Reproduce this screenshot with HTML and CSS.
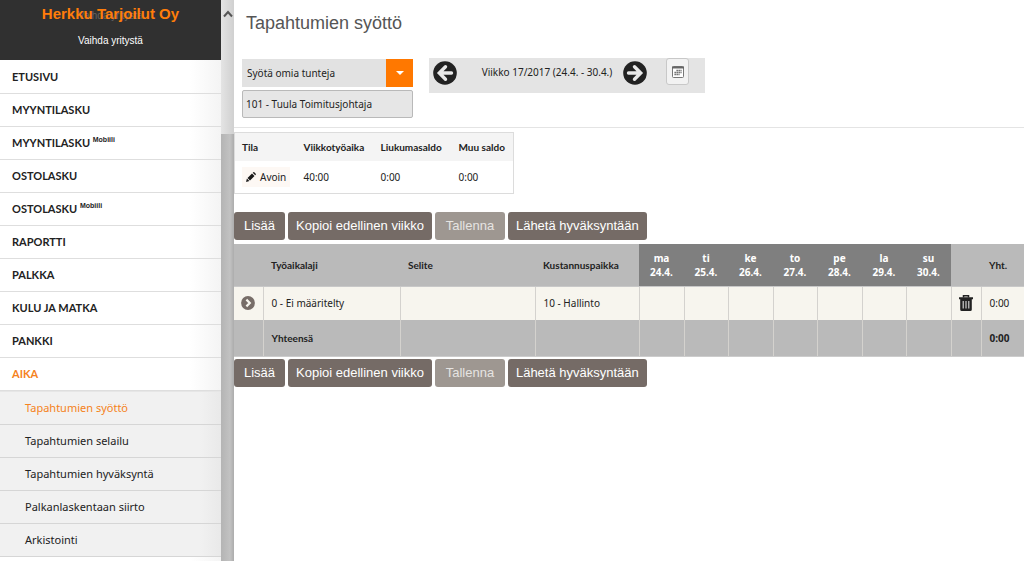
FILE: index.html
```html
<!DOCTYPE html>
<html lang="fi">
<head>
<meta charset="utf-8">
<title>Tapahtumien syöttö</title>
<link rel="stylesheet" href="styles.css">
</head>
<body>
<div class="app">
  <aside class="sidebar">
    <header class="company">
      <span class="company-ghost" aria-hidden="true">Vaihda yritystä</span>
      <strong class="company-name">Herkku Tarjoilut Oy</strong>
      <a class="company-switch" href="#">Vaihda yritystä</a>
    </header>
    <nav class="menu">
      <a href="#">ETUSIVU</a>
      <a href="#">MYYNTILASKU</a>
      <a href="#">MYYNTILASKU <span class="tag">Mobiili</span></a>
      <a href="#">OSTOLASKU</a>
      <a href="#">OSTOLASKU <span class="tag">Mobiili</span></a>
      <a href="#">RAPORTTI</a>
      <a href="#">PALKKA</a>
      <a href="#">KULU JA MATKA</a>
      <a href="#">PANKKI</a>
      <a class="active" href="#">AIKA</a>
      <div class="submenu">
        <a class="active" href="#">Tapahtumien syöttö</a>
        <a href="#">Tapahtumien selailu</a>
        <a href="#">Tapahtumien hyväksyntä</a>
        <a href="#">Palkanlaskentaan siirto</a>
        <a href="#">Arkistointi</a>
      </div>
    </nav>
  </aside>
  <div class="scrollbar">
    <button class="scroll-up" type="button" aria-label="Vieritä ylös"><svg width="10" height="8" viewBox="0 0 10 8"><path d="M1 6.500 5 2l4 4.500" fill="none" stroke="#555" stroke-width="2"/></svg></button>
    <div class="thumb"></div>
  </div>
  <main class="main">
    <h1>Tapahtumien syöttö</h1>
    <div class="filters">
      <div class="pickers">
        <div class="select-wrap">
          <select class="mode" aria-label="Syöttötapa"><option>Syötä omia tunteja</option></select>
          <span class="select-arrow"></span>
        </div>
        <input class="person" type="text" aria-label="Henkilö" value="101 - Tuula Toimitusjohtaja">
      </div>
      <div class="week">
        <button class="round" type="button" aria-label="Edellinen viikko"><svg width="24" height="24" viewBox="0 0 24 24"><circle cx="12" cy="12" r="11.800" fill="#222"/><path d="M12.500 5.800 6.300 12l6.200 6.200M7 12h11.500" fill="none" stroke="#e9e9e9" stroke-width="3.400" stroke-linecap="round"/></svg></button>
        <span class="week-label">Viikko 17/2017 (24.4. - 30.4.)</span>
        <button class="round" type="button" aria-label="Seuraava viikko"><svg width="24" height="24" viewBox="0 0 24 24"><circle cx="12" cy="12" r="11.800" fill="#222"/><path d="M11.500 5.800 17.700 12l-6.200 6.200M17 12H5.500" fill="none" stroke="#e9e9e9" stroke-width="3.400" stroke-linecap="round"/></svg></button>
        <button class="calendar" type="button" aria-label="Kalenteri"><svg width="12" height="12" viewBox="0 0 12 12"><rect x=".5" y=".5" width="11" height="11" rx="1" fill="#fff" stroke="#777"/><path d="M0 1.500h12" stroke="#666" stroke-width="2"/><path d="M4.500 4.500h5M2.500 6.500h7M2.500 8.500h5" stroke="#555" stroke-width="1.300" stroke-dasharray="1.300 .7"/></svg></button>
      </div>
    </div>
    <section class="content">
      <table class="balance">
        <thead><tr><th>Tila</th><th>Viikkotyöaika</th><th>Liukumasaldo</th><th>Muu saldo</th></tr></thead>
        <tbody><tr><td><span class="status"><svg width="10" height="10" viewBox="0 0 10 10"><path d="M0 10 .9 6.600 3.400 9.100zM1.500 6 6 1.500 8.500 4 4 8.500zM6.700.8 7.400.200Q7.900-.1 8.300.3L9.700 1.700Q10.100 2.200 9.700 2.700L9.200 3.300z" fill="#1a1a1a"/></svg>Avoin</span></td><td>40:00</td><td>0:00</td><td>0:00</td></tr></tbody>
      </table>
      <div class="actions">
        <button type="button">Lisää</button><button type="button">Kopioi edellinen viikko</button><button class="muted" type="button">Tallenna</button><button type="button">Lähetä hyväksyntään</button>
      </div>
      <table class="hours">
        <colgroup><col class="c-open"><col class="c-type"><col><col class="c-cost"><col class="c-day"><col class="c-day"><col class="c-day"><col class="c-day"><col class="c-day"><col class="c-day"><col class="c-day"><col class="c-del"><col class="c-sum"></colgroup>
        <thead>
          <tr><th></th><th>Työaikalaji</th><th>Selite</th><th>Kustannuspaikka</th><th class="day">ma<br>24.4.</th><th class="day">ti<br>25.4.</th><th class="day">ke<br>26.4.</th><th class="day">to<br>27.4.</th><th class="day">pe<br>28.4.</th><th class="day">la<br>29.4.</th><th class="day">su<br>30.4.</th><th></th><th>Yht.</th></tr>
        </thead>
        <tbody>
          <tr><td class="icon"><button class="bare" type="button" aria-label="Avaa rivi"><svg width="14" height="14" viewBox="0 0 14 14"><circle cx="7" cy="7" r="6.900" fill="#776d68"/><path d="m5.400 3.600 3.400 3.400-3.400 3.400" fill="none" stroke="#f7f5ee" stroke-width="2.200"/></svg></button></td><td>0 - Ei määritelty</td><td></td><td>10 - Hallinto</td><td></td><td></td><td></td><td></td><td></td><td></td><td></td><td class="icon"><button class="bare" type="button" aria-label="Poista rivi"><svg width="14" height="16" viewBox="0 0 14 16"><path d="M4.500 2.500V.8h5v1.700" fill="none" stroke="#222" stroke-width="1.500"/><path d="M0 2.300h14v2H0zM1.200 4h11.600v10.500q0 1.500-1.500 1.500H2.700q-1.500 0-1.500-1.500z" fill="#222"/><path d="M4.200 6v7.500M7 6v7.500M9.800 6v7.500" stroke="#ddd" stroke-width="1.100"/></svg></button></td><td>0:00</td></tr>
        </tbody>
        <tfoot>
          <tr><td></td><td>Yhteensä</td><td></td><td></td><td></td><td></td><td></td><td></td><td></td><td></td><td></td><td></td><td class="total">0:00</td></tr>
        </tfoot>
      </table>
      <div class="actions bottom">
        <button type="button">Lisää</button><button type="button">Kopioi edellinen viikko</button><button class="muted" type="button">Tallenna</button><button type="button">Lähetä hyväksyntään</button>
      </div>
    </section>
  </main>
</div>
</body>
</html>
```
FILE: styles.css
```css
* { box-sizing: border-box; }
body { margin: 0; background: #fff; color: #222; font: 10px/14px "Noto Sans", "Open Sans", sans-serif; }
button, input, select { font: inherit; color: inherit; margin: 0; padding: 0; border: 0; border-radius: 0; background: none; }
svg { display: block; }
a { color: inherit; text-decoration: none; }
.app { display: flex; min-height: 100vh; }

.sidebar { flex: 0 0 221px; background: linear-gradient(90deg, #fff 190px, #f4f4f4); }
.company { position: relative; display: flex; flex-direction: column; align-items: center; gap: 10px; height: 60px; padding-top: 4px; background: #303030; color: #fff; font: 10px/20px "Liberation Sans", Arial, sans-serif; }
.company-ghost { position: absolute; top: 6px; color: #626262; }
.company-name { position: relative; color: #ff7d0a; font-size: 15px; }
.company-switch { line-height: 14px; }
.menu { padding-top: 1px; font: bold 11px/32px Lato, sans-serif; }
.menu a { display: block; padding-left: 12px; border-bottom: 1px solid #dedede; }
.menu .active { color: #f58220; }
.tag { font: bold 7px/8px "Liberation Sans", Arial, sans-serif; vertical-align: 5px; }
.submenu { border-top: 1px solid #e6e6e6; background: linear-gradient(90deg, #f1f1f1 200px, #e9e9e9); font: 11px/32px "Noto Sans", sans-serif; }
.menu .submenu a { padding-left: 25px; border-color: #d6d6d6; }

.scrollbar { flex: 0 0 13px; display: flex; flex-direction: column; background: linear-gradient(90deg, #e4e4e4, #d0d0d0); }
.scroll-up { display: flex; justify-content: center; height: 134px; padding-top: 10px; align-items: flex-start; }
.thumb { flex: 1; background: linear-gradient(90deg, #b4b4b4, #c2c2c2 9px, #acacac); }

.main { flex: 1; min-width: 0; }
h1 { margin: 0; padding: 12px 12px 23px; color: #555; font: 18px/22px "Liberation Sans", Arial, sans-serif; }
.filters { display: flex; align-items: flex-start; gap: 16px; padding: 1px 8px 9px; border-bottom: 1px solid #e4e4e4; }
.pickers { display: flex; flex-direction: column; gap: 3px; width: 171px; padding-top: 1px; }
.select-wrap { position: relative; display: flex; }
.mode { appearance: none; width: 100%; height: 28px; padding: 0 32px 0 5px; background: #e2e2e2; }
.select-arrow { position: absolute; top: 0; right: 0; display: grid; place-items: center; width: 27px; height: 28px; background: #ff7800; pointer-events: none; }
.select-arrow::after { content: ""; border: 4px solid transparent; border-top-color: #fff; border-bottom: 0; }
.person { width: 100%; height: 28px; padding: 0 3px; border: 1px solid #b9b9b9; border-radius: 2px; background: #e6e6e6; }
.week { display: flex; align-items: flex-start; width: 276px; height: 35px; padding: 0 16px 0 4px; background: #e4e4e4; }
.round { padding-top: 3px; }
.week-label { flex: 1; padding: 7px 0 0 14px; text-align: center; }
.calendar { display: grid; place-items: center; width: 23px; height: 27px; margin-left: 19px; border: 1px solid #c8c8c8; border-radius: 3px; background: #f2f2f2; }

.content { padding-top: 4px; }
table { border-collapse: collapse; }
th { text-align: left; white-space: nowrap; }
th, tfoot { font-family: Lato, sans-serif; }
th, td { padding: 0 8px; }
.balance { width: 280px; border: 1px solid #dcdcdc; table-layout: fixed; }
.balance th { height: 28px; background: #f4f4f4; }
.balance th:nth-child(1) { width: 61px; }
.balance th:nth-child(2) { width: 77px; }
.balance th:nth-child(3) { width: 78px; }
.balance td { height: 33px; }
.balance th:first-child, .balance td:first-child { padding-left: 7px; }
.status { display: inline-flex; align-items: center; gap: 4px; padding: 3px 4px; background: #fdf8f4; }

.actions { display: flex; gap: 3px; padding: 18px 0 4px; }
.actions.bottom { padding-top: 2px; }
.actions button { min-width: 51px; height: 28px; padding: 0 8px; border-radius: 3px; background: #756b66; color: #fff; font: 13px/28px "Liberation Sans", Arial, sans-serif; }
.actions .muted { min-width: 70px; background: #9e9791; color: #e6e4e2; }

.hours { width: 100%; table-layout: fixed; background: #bababa; }
.c-open { width: 29px; }
.c-type { width: 137px; }
.c-cost { width: 104px; }
.c-day { width: 45px; }
.c-day:nth-child(even) { width: 44px; }
.c-del { width: 30px; }
.c-sum { width: 43px; }
.hours th { height: 42px; border-bottom: 1px solid #c8c8c8; }
.hours .day { padding: 0; background: #7f7f7f; color: #fff; font-family: "Noto Sans", sans-serif; text-align: center; }
.hours td { height: 34px; border-left: 1px solid #d4d2ce; }
.hours td:first-child { border-left: 0; }
.hours tbody td { background: #f7f5ee; }
.hours tfoot td { height: 36px; font-weight: bold; border-bottom: 1px solid #ccc; }
.hours .total { font-family: "Noto Sans", sans-serif; }
.hours .icon { padding: 0; }
.bare { display: block; margin: 0 auto; }
```
